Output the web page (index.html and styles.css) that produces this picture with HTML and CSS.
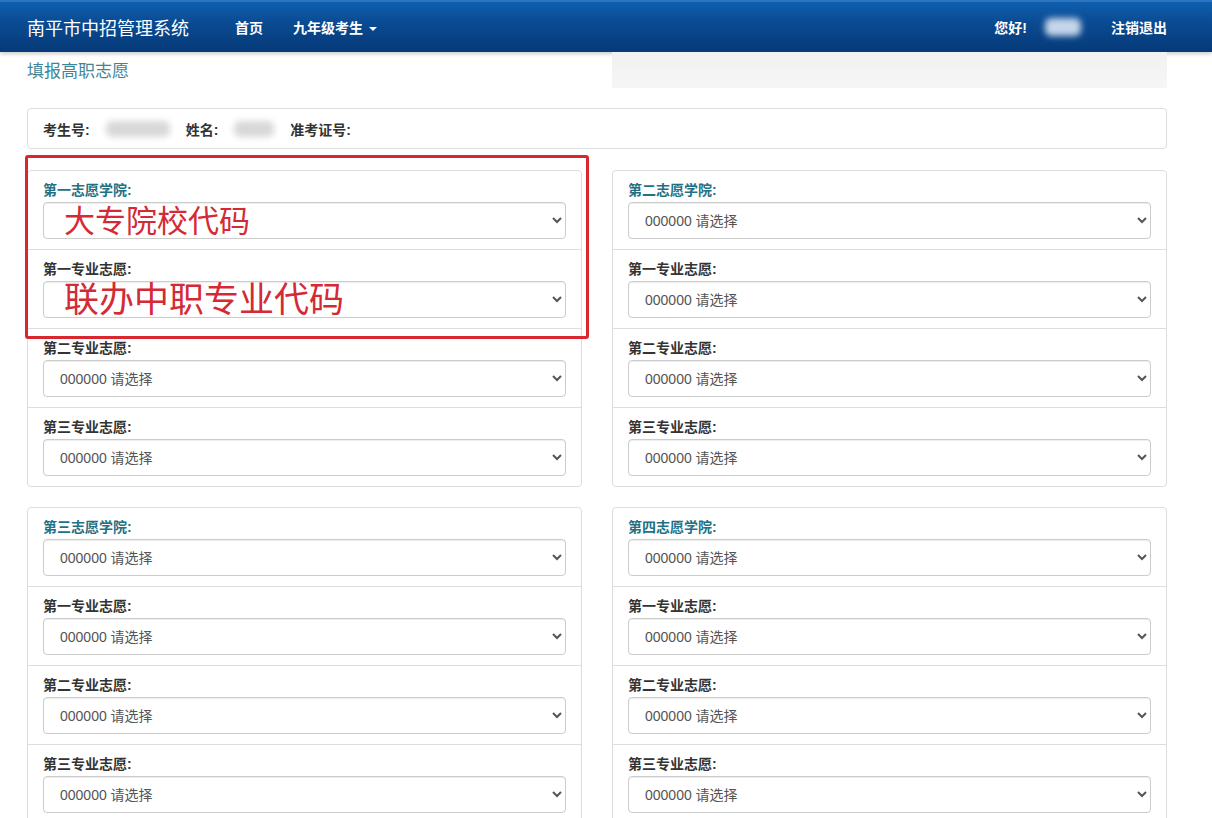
FILE: index.html
```html
<!DOCTYPE html>
<html lang="zh-CN">
<head>
    <meta charset="UTF-8">
    <meta name="viewport" content="width=device-width, initial-scale=1.0">
    <title>填报高职志愿 - 南平市中招管理系统</title>
    <link rel="stylesheet" href="styles.css">
</head>
<body>
    <div class="navbar">
        <div class="nav-inner">
            <span class="brand">南平市中招管理系统</span>
            <a class="nav-link" href="#">首页</a>
            <a class="nav-link" href="#">九年级考生 <span class="caret"></span></a>
            <div class="nav-right">
                <span class="hello">您好!</span>
                <span class="blur-name"></span>
                <a class="nav-link" href="#">注销退出</a>
            </div>
        </div>
    </div>

    <div class="container">
        <div class="title-row">
            <h4 class="page-title">填报高职志愿</h4>
            <div class="well"></div>
        </div>

        <div class="info-box">
            <span class="info-label">考生号:</span>
            <span class="blur blur-id"></span>
            <span class="info-label">姓名:</span>
            <span class="blur blur-nm"></span>
            <span class="info-label">准考证号:</span>
        </div>

        <div class="choices">
            <!-- annotation drawn over the first panel -->
            <div class="mark-box"></div>
            <div class="mark-text mark-1">大专院校代码</div>
            <div class="mark-text mark-2">联办中职专业代码</div>

            <div class="panel">
                <div class="row">
                    <label class="school">第一志愿学院:</label>
                    <select><option></option></select>
                </div>
                <div class="row">
                    <label>第一专业志愿:</label>
                    <select><option></option></select>
                </div>
                <div class="row">
                    <label>第二专业志愿:</label>
                    <select><option>000000 请选择</option></select>
                </div>
                <div class="row">
                    <label>第三专业志愿:</label>
                    <select><option>000000 请选择</option></select>
                </div>
            </div>

            <div class="panel">
                <div class="row">
                    <label class="school">第二志愿学院:</label>
                    <select><option>000000 请选择</option></select>
                </div>
                <div class="row">
                    <label>第一专业志愿:</label>
                    <select><option>000000 请选择</option></select>
                </div>
                <div class="row">
                    <label>第二专业志愿:</label>
                    <select><option>000000 请选择</option></select>
                </div>
                <div class="row">
                    <label>第三专业志愿:</label>
                    <select><option>000000 请选择</option></select>
                </div>
            </div>

            <div class="panel">
                <div class="row">
                    <label class="school">第三志愿学院:</label>
                    <select><option>000000 请选择</option></select>
                </div>
                <div class="row">
                    <label>第一专业志愿:</label>
                    <select><option>000000 请选择</option></select>
                </div>
                <div class="row">
                    <label>第二专业志愿:</label>
                    <select><option>000000 请选择</option></select>
                </div>
                <div class="row">
                    <label>第三专业志愿:</label>
                    <select><option>000000 请选择</option></select>
                </div>
            </div>

            <div class="panel">
                <div class="row">
                    <label class="school">第四志愿学院:</label>
                    <select><option>000000 请选择</option></select>
                </div>
                <div class="row">
                    <label>第一专业志愿:</label>
                    <select><option>000000 请选择</option></select>
                </div>
                <div class="row">
                    <label>第二专业志愿:</label>
                    <select><option>000000 请选择</option></select>
                </div>
                <div class="row">
                    <label>第三专业志愿:</label>
                    <select><option>000000 请选择</option></select>
                </div>
            </div>
        </div>
    </div>
</body>
</html>
```

FILE: styles.css
```css
body {
    margin: 0;
    font-family: "Liberation Sans", "Noto Sans CJK SC", sans-serif;
    font-size: 14px;
    color: #333;
    background: #fff;
}
.navbar {
    height: 52px;
    background: linear-gradient(to bottom, #0f5fae 0%, #0a4b93 40%, #063a78 100%);
    border-top: 2px solid #2c74bd;
    box-sizing: border-box;
    box-shadow: 0 2px 4px rgba(0,0,0,0.2);
}
.nav-inner {
    width: 1140px;
    margin-left: 27px;
    height: 50px;
    display: flex;
    align-items: center;
}
.brand {
    color: #fff;
    font-size: 18px;
    margin-right: 46px;
}
.nav-link {
    color: #fff;
    text-decoration: none;
    font-size: 14px;
    font-weight: bold;
    margin-right: 30px;
}
.caret {
    display: inline-block;
    width: 0;
    height: 0;
    border-left: 4px solid transparent;
    border-right: 4px solid transparent;
    border-top: 4px solid #fff;
    vertical-align: middle;
    margin-left: 2px;
}
.nav-right {
    margin-left: auto;
    display: flex;
    align-items: center;
}
.nav-right .nav-link {
    margin-right: 0;
}
.hello {
    color: #fff;
    font-size: 14px;
    font-weight: bold;
}
.blur-name {
    width: 36px;
    height: 18px;
    margin: 0 30px 0 18px;
    background: #c5d5ea;
    border-radius: 6px;
    filter: blur(3px);
}
.container {
    width: 1140px;
    margin-left: 27px;
}
.title-row {
    display: grid;
    grid-template-columns: 555px 555px;
    column-gap: 30px;
    height: 36px;
}
.page-title {
    margin: 5px 0 0 0;
    font-size: 17px;
    font-weight: normal;
    color: #3d8698;
}
.well {
    background: linear-gradient(to bottom, #f1f1f1, #f6f6f6);
}
.info-box {
    margin-top: 20px;
    height: 41px;
    box-sizing: border-box;
    border: 1px solid #ddd;
    border-radius: 4px;
    padding: 0 15px;
    display: flex;
    align-items: center;
}
.info-label {
    font-size: 14px;
    font-weight: bold;
    color: #333;
}
.blur {
    height: 16px;
    background: #d8d8d8;
    border-radius: 6px;
    filter: blur(3px);
}
.blur-id {
    width: 64px;
    margin: 0 16px 0 16px;
}
.blur-nm {
    width: 40px;
    margin: 0 16px 0 16px;
}
.choices {
    position: relative;
    margin-top: 21px;
    display: grid;
    grid-template-columns: 555px 555px;
    column-gap: 30px;
    row-gap: 20px;
}
.panel {
    border: 1px solid #ddd;
    border-radius: 4px;
}
.row {
    padding: 10px 15px;
    border-top: 1px solid #ddd;
}
.row:first-child {
    border-top: none;
}
.row label {
    display: block;
    height: 21px;
    line-height: 19px;
    font-size: 14px;
    font-weight: bold;
    color: #333;
}
.row label.school {
    color: #1f7184;
}
.row select {
    display: block;
    width: 100%;
    height: 37px;
    padding: 6px 12px;
    font-family: "Liberation Sans", "Noto Sans CJK SC", sans-serif;
    font-size: 14px;
    color: #555;
    background: #fff;
    border: 1px solid #ccc;
    border-radius: 4px;
    box-shadow: inset 0 1px 1px rgba(0,0,0,0.075);
}
.mark-box {
    position: absolute;
    left: -2px;
    top: -15px;
    width: 558px;
    height: 178px;
    border: 3px solid #d9272f;
    border-radius: 3px;
    pointer-events: none;
}
.mark-text {
    position: absolute;
    left: 37px;
    color: #d42a35;
    font-family: "Noto Sans CJK SC", sans-serif;
    line-height: 1;
    pointer-events: none;
}
.mark-1 {
    top: 33px;
    font-size: 31px;
}
.mark-2 {
    top: 109px;
    font-size: 35px;
}
```
